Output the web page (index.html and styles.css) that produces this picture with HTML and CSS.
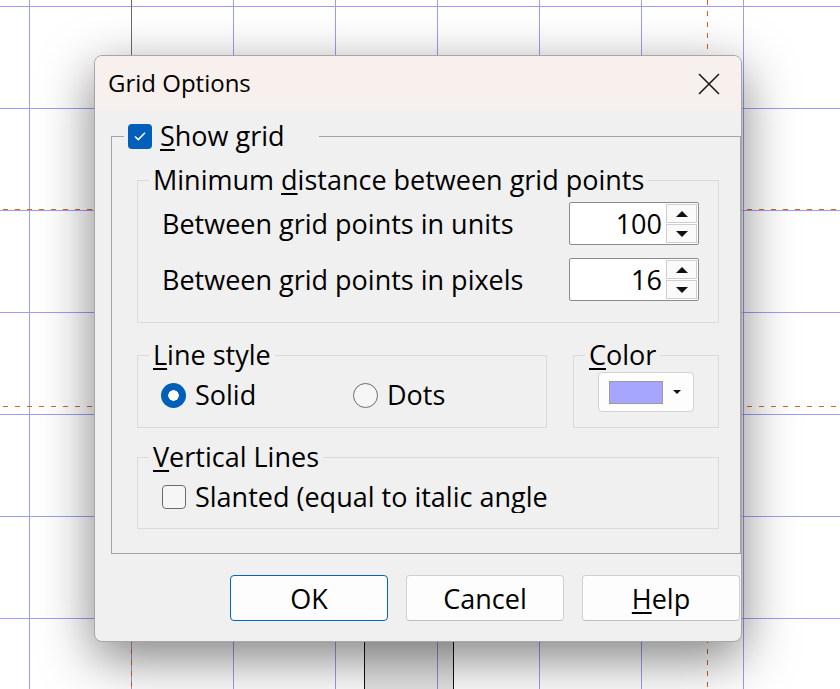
FILE: index.html
```html
<!DOCTYPE html>
<html lang="en">
<head>
    <meta charset="UTF-8">
    <meta name="viewport" content="width=device-width, initial-scale=1.0">
    <title>Grid Options</title>
    <link rel="stylesheet" href="styles.css">
</head>
<body>
    <div class="canvas">
        <!-- guide lines of the glyph canvas -->
        <div class="guide-h guide-h1"></div>
        <div class="guide-h guide-h2"></div>
        <div class="guide-v guide-v1"></div>
        <div class="guide-v guide-v2"></div>
        <div class="guide-mark"></div>
        <div class="glyph-box"></div>

        <div class="dialog">
            <div class="titlebar">
                <span class="title">Grid Options</span>
                <svg class="close-icon" width="22" height="22" viewBox="0 0 22 22">
                    <path d="M1 1 L21 21 M21 1 L1 21" stroke="#1a1a1a" stroke-width="1.6" fill="none"/>
                </svg>
            </div>

            <div class="dialog-body">
                <fieldset class="group group-main">
                    <legend class="check-legend">
                        <span class="checkbox checked">
                            <svg width="16" height="16" viewBox="0 0 16 16">
                                <path d="M3 8.5 L6.3 11.6 L13 4.8" stroke="#fff" stroke-width="1.5" fill="none"/>
                            </svg>
                        </span>
                        <span><u>S</u>how grid</span>
                    </legend>

                    <div class="groups">
                        <fieldset class="group group-distance">
                            <legend>Minimum <u>d</u>istance between grid points</legend>
                            <div class="field-row">
                                <span>Between grid points in units</span>
                                <div class="spinner">
                                    <span class="spin-value">100</span>
                                    <span class="spin-buttons">
                                        <span class="spin-btn"><span class="arrow-up"></span></span>
                                        <span class="spin-btn"><span class="arrow-down"></span></span>
                                    </span>
                                </div>
                            </div>
                            <div class="field-row">
                                <span>Between grid points in pixels</span>
                                <div class="spinner">
                                    <span class="spin-value">16</span>
                                    <span class="spin-buttons">
                                        <span class="spin-btn"><span class="arrow-up"></span></span>
                                        <span class="spin-btn"><span class="arrow-down"></span></span>
                                    </span>
                                </div>
                            </div>
                        </fieldset>

                        <div class="group-pair">
                            <fieldset class="group group-style">
                                <legend><u>L</u>ine style</legend>
                                <div class="radio-row">
                                    <label class="radio-item"><span class="radio checked"></span>Solid</label>
                                    <label class="radio-item"><span class="radio"></span>Dots</label>
                                </div>
                            </fieldset>
                            <fieldset class="group group-color">
                                <legend><u>C</u>olor</legend>
                                <button class="color-btn">
                                    <span class="swatch"></span>
                                    <span class="arrow-down small"></span>
                                </button>
                            </fieldset>
                        </div>

                        <fieldset class="group group-vertical">
                            <legend><u>V</u>ertical Lines</legend>
                            <label class="check-row">
                                <span class="checkbox"></span>
                                <span class="clip-text">Slanted (equal to italic angle)</span>
                            </label>
                        </fieldset>
                    </div>
                </fieldset>

                <div class="buttons">
                    <button class="btn btn-default">OK</button>
                    <button class="btn">Cancel</button>
                    <button class="btn"><u>H</u>elp</button>
                </div>
            </div>
        </div>
    </div>
</body>
</html>
```

FILE: styles.css
```css
body {
    margin: 0;
    font-family: "Open Sans", "Noto Sans", sans-serif;
    color: #000;
}
u {
    text-decoration-thickness: 2px;
    text-underline-offset: 3px;
}

/* canvas behind the dialog */
.canvas {
    position: relative;
    width: 840px;
    height: 689px;
    overflow: hidden;
    background-color: #fff;
    background-image:
        linear-gradient(to right, #9d9df4 1px, transparent 1px),
        linear-gradient(to bottom, #9d9df4 1px, transparent 1px);
    background-size: 102px 102px;
    background-position: 29px 0, 0 6px;
}
.guide-h {
    position: absolute;
    left: 0;
    width: 840px;
    height: 1px;
    background: repeating-linear-gradient(to right, transparent 0 3px, #d0661f 3px 8px, transparent 8px 12px);
}
.guide-h1 { top: 209px; }
.guide-h2 { top: 406px; }
.guide-v {
    position: absolute;
    top: 0;
    width: 1px;
    height: 689px;
    background: repeating-linear-gradient(to bottom, #d0661f 0 5px, transparent 5px 11px);
}
.guide-v1 { left: 131px; }
.guide-v2 { left: 707px; }
.guide-mark {
    position: absolute;
    left: 131px;
    top: 0;
    width: 1px;
    height: 60px;
    background: #6a6a6a;
}
.glyph-box {
    position: absolute;
    left: 364px;
    top: 560px;
    width: 88px;
    height: 140px;
    border-left: 1px solid #111;
    border-right: 1px solid #111;
    background: rgba(0, 0, 0, 0.1);
}

/* dialog window */
.dialog {
    position: absolute;
    left: 94px;
    top: 55px;
    width: 646px;
    border: 1px solid #a6a6a6;
    border-radius: 8px;
    background: #f0f0f0;
    overflow: hidden;
    box-shadow: 0 16px 52px rgba(0, 0, 0, 0.5);
}
.titlebar {
    height: 55px;
    background: #f8f0ed;
    display: flex;
    align-items: center;
    justify-content: space-between;
    padding: 0 21px 0 13px;
}
.title {
    font-size: 24px;
    margin-top: -2px;
}
.close-icon {
    display: block;
    margin-top: 1px;
}
.dialog-body {
    padding: 9px 0 20px 16px;
    font-size: 27px;
}

/* group boxes */
.group {
    margin: 0;
    border: 1px solid #dadada;
    padding: 0 19px 0 11px;
    min-width: 0;
}
.group legend {
    padding: 0 4px;
    line-height: 32px;
    height: 32px;
}
.group-main {
    border-color: #a3a3a3;
    padding: 0 21px 24px 12px;
}
.check-legend {
    display: flex;
    align-items: center;
    gap: 8px;
    padding: 0 4px 0 3px;
}
.check-legend span:last-child {
    padding-right: 30px;
}
.groups {
    padding-left: 13px;
}
.group-distance {
    margin-top: 12px;
    padding-top: 6px;
    padding-bottom: 21px;
}
.field-row {
    display: flex;
    align-items: center;
    justify-content: space-between;
    padding-left: 13px;
}
.field-row + .field-row {
    margin-top: 13px;
}

/* numeric spinner */
.spinner {
    width: 128px;
    height: 41px;
    border: 1px solid #8c8c8c;
    border-radius: 2px;
    background: #fff;
    display: flex;
}
.spin-value {
    flex: 1;
    text-align: right;
    line-height: 41px;
    padding-right: 4px;
}
.spin-buttons {
    width: 31px;
    display: flex;
    flex-direction: column;
    gap: 1px;
    padding: 1px 1px 1px 0;
}
.spin-btn {
    flex: 1;
    border: 1px solid #cfcfcf;
    background: #fafafa;
    display: flex;
    align-items: center;
    justify-content: center;
}
.arrow-up {
    width: 0;
    height: 0;
    border-left: 6px solid transparent;
    border-right: 6px solid transparent;
    border-bottom: 6px solid #111;
}
.arrow-down {
    width: 0;
    height: 0;
    border-left: 6px solid transparent;
    border-right: 6px solid transparent;
    border-top: 6px solid #111;
}
.arrow-down.small {
    border-left-width: 4px;
    border-right-width: 4px;
    border-top-width: 4px;
}

/* line style and color */
.group-pair {
    display: flex;
    gap: 26px;
    margin-top: 16px;
}
.group-style {
    flex: 1;
    padding-top: 8px;
    padding-bottom: 15px;
}
.radio-row {
    display: grid;
    grid-template-columns: 192px auto;
    padding-left: 12px;
    line-height: 32px;
}
.radio-item {
    display: flex;
    align-items: center;
    gap: 9px;
}
.radio {
    width: 23px;
    height: 23px;
    border: 1px solid #6c6c6c;
    border-radius: 50%;
    background: #f6f6f6;
    box-sizing: content-box;
}
.radio.checked {
    width: 25px;
    height: 25px;
    border: none;
    background: radial-gradient(circle, #fff 0 5px, #005fb8 5.5px);
}
.group-color {
    width: 146px;
    box-sizing: border-box;
    padding-top: 1px;
    padding-bottom: 15px;
}
.color-btn {
    margin-left: 13px;
    width: 96px;
    height: 40px;
    border: 1px solid #d3d3d3;
    border-radius: 4px;
    background: #fdfdfd;
    display: flex;
    align-items: center;
    padding: 0 11px 0 10px;
    gap: 10px;
}
.swatch {
    width: 52px;
    height: 21px;
    background: #a6a6ff;
    border: 1px solid #9a9a9a;
}

/* vertical lines */
.group-vertical {
    margin-top: 13px;
    padding-top: 8px;
    padding-bottom: 15px;
}
.check-row {
    display: flex;
    align-items: center;
    gap: 9px;
    padding-left: 13px;
    line-height: 32px;
}
.checkbox {
    width: 22px;
    height: 22px;
    border: 1px solid #6c6c6c;
    border-radius: 4px;
    background: #f6f6f6;
    display: flex;
    align-items: center;
    justify-content: center;
}
.checkbox.checked {
    width: 24px;
    height: 25px;
    border: none;
    background: #005fb8;
}
.clip-text {
    width: 352px;
    overflow: hidden;
    white-space: nowrap;
}

/* dialog buttons */
.buttons {
    display: flex;
    justify-content: flex-end;
    gap: 18px;
    margin-top: 21px;
    padding-right: 1px;
}
.btn {
    width: 158px;
    height: 46px;
    border: 1px solid #d0d0d0;
    border-bottom-color: #bdbdbd;
    border-radius: 4px;
    background: #fdfdfd;
    font-family: inherit;
    font-size: 27px;
    color: #000;
    padding: 0;
}
.btn-default {
    border-color: #0067c0;
}
```
